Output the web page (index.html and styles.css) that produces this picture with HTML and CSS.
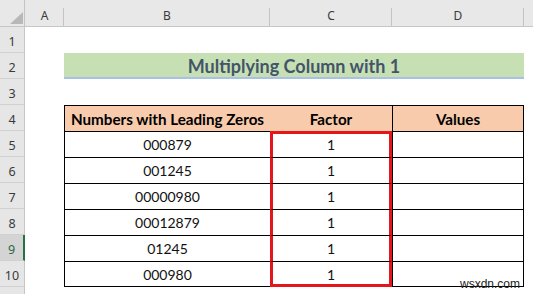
FILE: index.html
```html
<!DOCTYPE html>
<html>
<head>
<meta charset="utf-8">
<link rel="stylesheet" href="styles.css">
</head>
<body>
<div class="sheet">
  <div class="ch corner"><svg class="tri" width="13" height="12" viewBox="0 0 13 12"><polygon points="13,0 13,12 0,12" fill="#b8b8b8"/></svg></div>
  <div class="ch">A</div>
  <div class="ch">B</div>
  <div class="ch">C</div>
  <div class="ch">D</div>
  <div class="ch last-ch"></div>

  <div class="rh">1</div><div></div><div></div><div></div><div></div><div></div>

  <div class="rh">2</div><div></div><div class="title">Multiplying Column with 1</div><div></div>

  <div class="rh">3</div><div></div><div></div><div></div><div></div><div></div>

  <div class="rh">4</div><div></div>
  <div class="t b h">Numbers with Leading Zeros</div>
  <div class="t h">Factor</div>
  <div class="t d h">Values</div>
  <div></div>

  <div class="rh">5</div><div></div>
  <div class="t b">000879</div><div class="t f first">1</div><div class="t d"></div><div></div>

  <div class="rh">6</div><div></div>
  <div class="t b">001245</div><div class="t f">1</div><div class="t d"></div><div></div>

  <div class="rh">7</div><div></div>
  <div class="t b">00000980</div><div class="t f">1</div><div class="t d"></div><div></div>

  <div class="rh">8</div><div></div>
  <div class="t b">00012879</div><div class="t f">1</div><div class="t d"></div><div></div>

  <div class="rh sel">9</div><div></div>
  <div class="t b">01245</div><div class="t f">1</div><div class="t d"></div><div></div>

  <div class="rh">10</div><div></div>
  <div class="t b end">000980</div><div class="t f lastf">1</div><div class="t d end"></div><div></div>

  <div class="rh rh-cut"></div><div></div><div></div><div></div><div></div><div></div>

  <div class="mark">wsxdn.com</div>
</div>
</body>
</html>
```

FILE: styles.css
```css
html, body {
  margin: 0;
  padding: 0;
}
body {
  width: 533px;
  height: 294px;
  overflow: hidden;
  background: #ffffff;
  font-family: Lato, "Open Sans", sans-serif;
}
.sheet {
  position: relative;
  display: grid;
  grid-template-columns: 25px 39px 206px 122px 132px 9px;
  grid-template-rows: 27px repeat(10, 26px) 7px;
}
.sheet > div {
  box-sizing: border-box;
}
.ch {
  background: linear-gradient(#c4c4c4, #c4c4c4) right 8px / 1px 19px no-repeat, #e8e8e8;
  border-bottom: 1px solid #c6c6c6;
  font-family: "Noto Sans", "Open Sans", sans-serif;
  font-size: 12px;
  color: #3a3a3a;
  text-align: center;
  line-height: 16px;
  padding-top: 8px;
}
.corner {
  position: relative;
  background: linear-gradient(#c4c4c4, #c4c4c4) right 0 / 1px 27px no-repeat, #e8e8e8;
}
.tri {
  position: absolute;
  right: 2px;
  bottom: 2px;
}
.last-ch {
  background: #e8e8e8;
}
.rh {
  background: #e6e6e6;
  border-right: 1px solid #c6c6c6;
  border-bottom: 1px solid #d0d0d0;
  font-family: "Noto Sans", "Open Sans", sans-serif;
  font-size: 12.5px;
  color: #3a3a3a;
  text-align: center;
  line-height: 16px;
  padding-top: 7px;
}
.rh.rh-cut {
  border-bottom: 0;
}
.rh.sel {
  background: #d4d4d4;
  color: #2a6a45;
  border-right: 2px solid #217346;
}
.title {
  grid-column: span 3;
  background: #c6e0b4;
  border-bottom: 2px solid #a9c1e6;
  color: #44546a;
  font-weight: 700;
  font-size: 18px;
  text-align: center;
  line-height: 22px;
  padding-top: 2px;
}
.t {
  border-top: 1px solid #000;
  font-size: 14px;
  color: #111;
  text-align: center;
  line-height: 22px;
  padding-top: 2px;
}
.b {
  border-left: 1px solid #000;
}
.d {
  border-left: 1px solid #000;
  border-right: 1px solid #000;
}
.end {
  border-bottom: 1px solid #000;
}
.h {
  background: #f8cbad;
  font-weight: 700;
  font-size: 15.2px;
  color: #000;
}
.f {
  border-left: 3px solid #e5161b;
  border-right: 3px solid #e5161b;
}
.f.first {
  border-top: 3px solid #e5161b;
  padding-top: 0;
}
.f.lastf {
  border-bottom: 3px solid #e5161b;
}
.mark {
  position: absolute;
  left: 460px;
  top: 277px;
  font-family: "Liberation Sans", Arial, sans-serif;
  font-size: 12px;
  color: #222;
}
```
